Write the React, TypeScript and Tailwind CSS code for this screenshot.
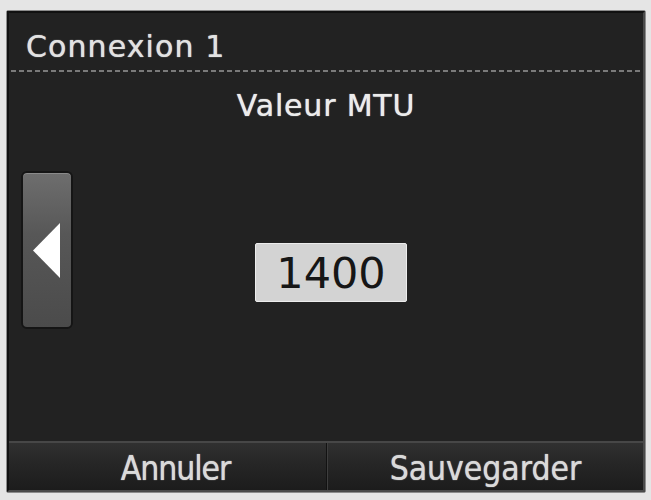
export default function App() {
  return (
    <div className="w-[651px] h-[500px] bg-[#e5e5e5] pt-[10px] pl-[6px] pr-[5px] pb-[7px] font-['DejaVu_Sans',sans-serif]">
      <div className="h-full border border-[#8c8c8c] rounded-[2px]">
        <div className="h-full flex flex-col bg-[#222222] border-l-2 border-t-2 border-[#111111] border-r-2 border-r-[#4a4a4a] border-b-2 border-b-[#4a4a4a]">
          {/* header */}
          <div className="h-[57px] pt-[19px] pl-[17px] shrink-0">
            <div className="text-[30px] leading-none tracking-[1.1px] text-[#e2e2e2] [text-shadow:0_0_1px_#e2e2e2]">Connexion 1</div>
          </div>
          <div className="h-[2px] mx-[2px] shrink-0 bg-[repeating-linear-gradient(90deg,#7a7a7a_0_5px,transparent_5px_8px)]" />

          {/* body */}
          <div className="flex-1 flex flex-col">
            <div className="pt-[19px] text-center text-[30px] leading-none tracking-[0.8px] text-[#ececec] [text-shadow:0_0_1px_#ececec]">
              Valeur MTU
            </div>
            <div className="flex items-start mt-[50px]">
              <button className="ml-[12px] w-[52px] h-[158px] rounded-[6px] border-2 border-[#151515] bg-[linear-gradient(180deg,#6e6e6e_0%,#575757_40%,#4b4b4b_100%)] flex items-center justify-center shadow-[inset_0_1px_0_#8a8a8a]">
                <svg width="29" height="55" viewBox="0 0 29 55" className="ml-[-2px]">
                  <polygon points="28,0 28,55 1,27.5" fill="#ffffff" />
                </svg>
              </button>
              <div className="flex-1 flex justify-center pt-[72px] pr-[54px]">
                <div className="w-[152px] h-[59px] bg-[#d3d3d3] border border-[#ececec] rounded-[2px] flex justify-center pt-[8px] text-[43px] leading-none text-[#161616]">
                  1400
                </div>
              </div>
            </div>
          </div>

          {/* footer */}
          <div className="h-[49px] shrink-0 flex border-t-2 border-[#474747] bg-[linear-gradient(180deg,#303030_0%,#262626_45%,#1c1c1c_100%)]">
            <button className="w-[318px] shrink-0 flex items-center justify-center pt-[3px] pl-[16px] border-r border-[#121212]">
              <span className="text-[30px] leading-none text-[#dadada] scale-y-[1.15] tracking-[-1px] [text-shadow:0_0_1px_#dadada]">Annuler</span>
            </button>
            <div className="w-px bg-[#3e3e3e]" />
            <button className="flex-1 flex items-center justify-center pt-[3px]">
              <span className="text-[30px] leading-none text-[#dadada] scale-y-[1.15] [text-shadow:0_0_1px_#dadada]">Sauvegarder</span>
            </button>
          </div>
        </div>
      </div>
    </div>
  );
}
